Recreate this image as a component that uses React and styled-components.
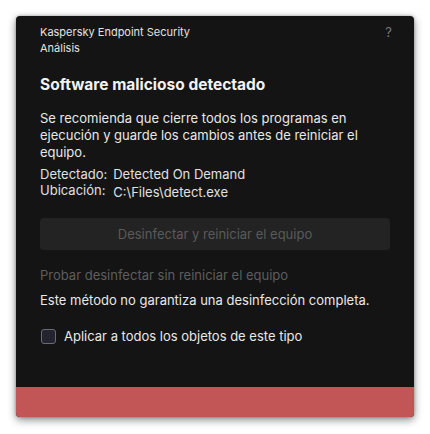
import React from "react";
import styled, { createGlobalStyle } from "styled-components";

const Global = createGlobalStyle`
  html, body {
    margin: 0;
    padding: 0;
    background: #ffffff;
  }
  body {
    font-family: Inter, "Noto Sans", "Liberation Sans", sans-serif;
    -webkit-font-smoothing: antialiased;
  }
`;

const Page = styled.div`
  padding: 16px;
  width: 430px;
  height: 434px;
  box-sizing: border-box;
`;

const Dialog = styled.div`
  width: 398px;
  height: 401px;
  background: #141414;
  border-radius: 4px;
  box-shadow: 0 3px 8px rgba(0, 0, 0, 0.45), 0 0 3px rgba(0, 0, 0, 0.3);
  display: flex;
  flex-direction: column;
  overflow: hidden;
  color: #ececec;
`;

const Header = styled.div`
  display: flex;
  justify-content: space-between;
  align-items: flex-start;
  padding: 8px 22px 0 24px;
`;

const AppName = styled.div`
  font-size: 11px;
  line-height: 16px;
  color: #e2e2e2;
`;

const Help = styled.span`
  font-size: 13px;
  line-height: 16px;
  color: #7a7a7a;
`;

const Body = styled.div`
  flex: 1;
  padding: 0 24px;
  display: flex;
  flex-direction: column;
`;

const Title = styled.h1`
  margin: 19px 0 0 0;
  font-size: 15.5px;
  line-height: 20px;
  font-weight: 700;
  color: #f2f2f2;
`;

const Text = styled.p`
  margin: ${(p) => p.$mt || 0}px 0 0 0;
  font-size: 13px;
  line-height: 17px;
  color: ${(p) => (p.$muted ? "#5e5e5e" : "#e8e8e8")};
`;

const Details = styled.div`
  margin-top: 5px;
  display: grid;
  grid-template-columns: auto 1fr;
  column-gap: 6px;
  font-size: 13px;
  line-height: 16px;
  color: #e0e0e0;
`;

const Value = styled.span`
  padding-top: ${(p) => p.$shift || 0}px;
`;

const Button = styled.button`
  margin-top: 18px;
  height: 32px;
  width: 100%;
  border: none;
  border-radius: 4px;
  background: #232323;
  color: #5a5a5a;
  font-family: inherit;
  font-size: 13px;
`;

const CheckRow = styled.label`
  margin-top: 19px;
  display: flex;
  align-items: center;
  gap: 8px;
  font-size: 13px;
  color: #e8e8e8;
`;

const Box = styled.span`
  width: 13px;
  height: 13px;
  border: 1.5px solid #6b6b78;
  border-radius: 3px;
  background: #24242f;
  margin-left: 1px;
`;

const Footer = styled.div`
  height: 30px;
  background: #c25556;
`;

export default function App() {
  return (
    <>
      <Global />
      <Page>
        <Dialog>
          <Header>
            <AppName>
              Kaspersky Endpoint Security
              <br />
              Análisis
            </AppName>
            <Help>?</Help>
          </Header>
          <Body>
            <Title>Software malicioso detectado</Title>
            <Text $mt={15}>
              Se recomienda que cierre todos los programas en ejecución y
              guarde los cambios antes de reiniciar el equipo.
            </Text>
            <Details>
              <span>Detectado:</span>
              <Value>Detected On Demand</Value>
              <span>Ubicación:</span>
              <Value $shift={2}>C:\Files\detect.exe</Value>
            </Details>
            <Button disabled>Desinfectar y reiniciar el equipo</Button>
            <Text $mt={17} $muted>
              Probar desinfectar sin reiniciar el equipo
            </Text>
            <Text $mt={8}>Este método no garantiza una desinfección completa.</Text>
            <CheckRow>
              <Box />
              Aplicar a todos los objetos de este tipo
            </CheckRow>
          </Body>
          <Footer />
        </Dialog>
      </Page>
    </>
  );
}
